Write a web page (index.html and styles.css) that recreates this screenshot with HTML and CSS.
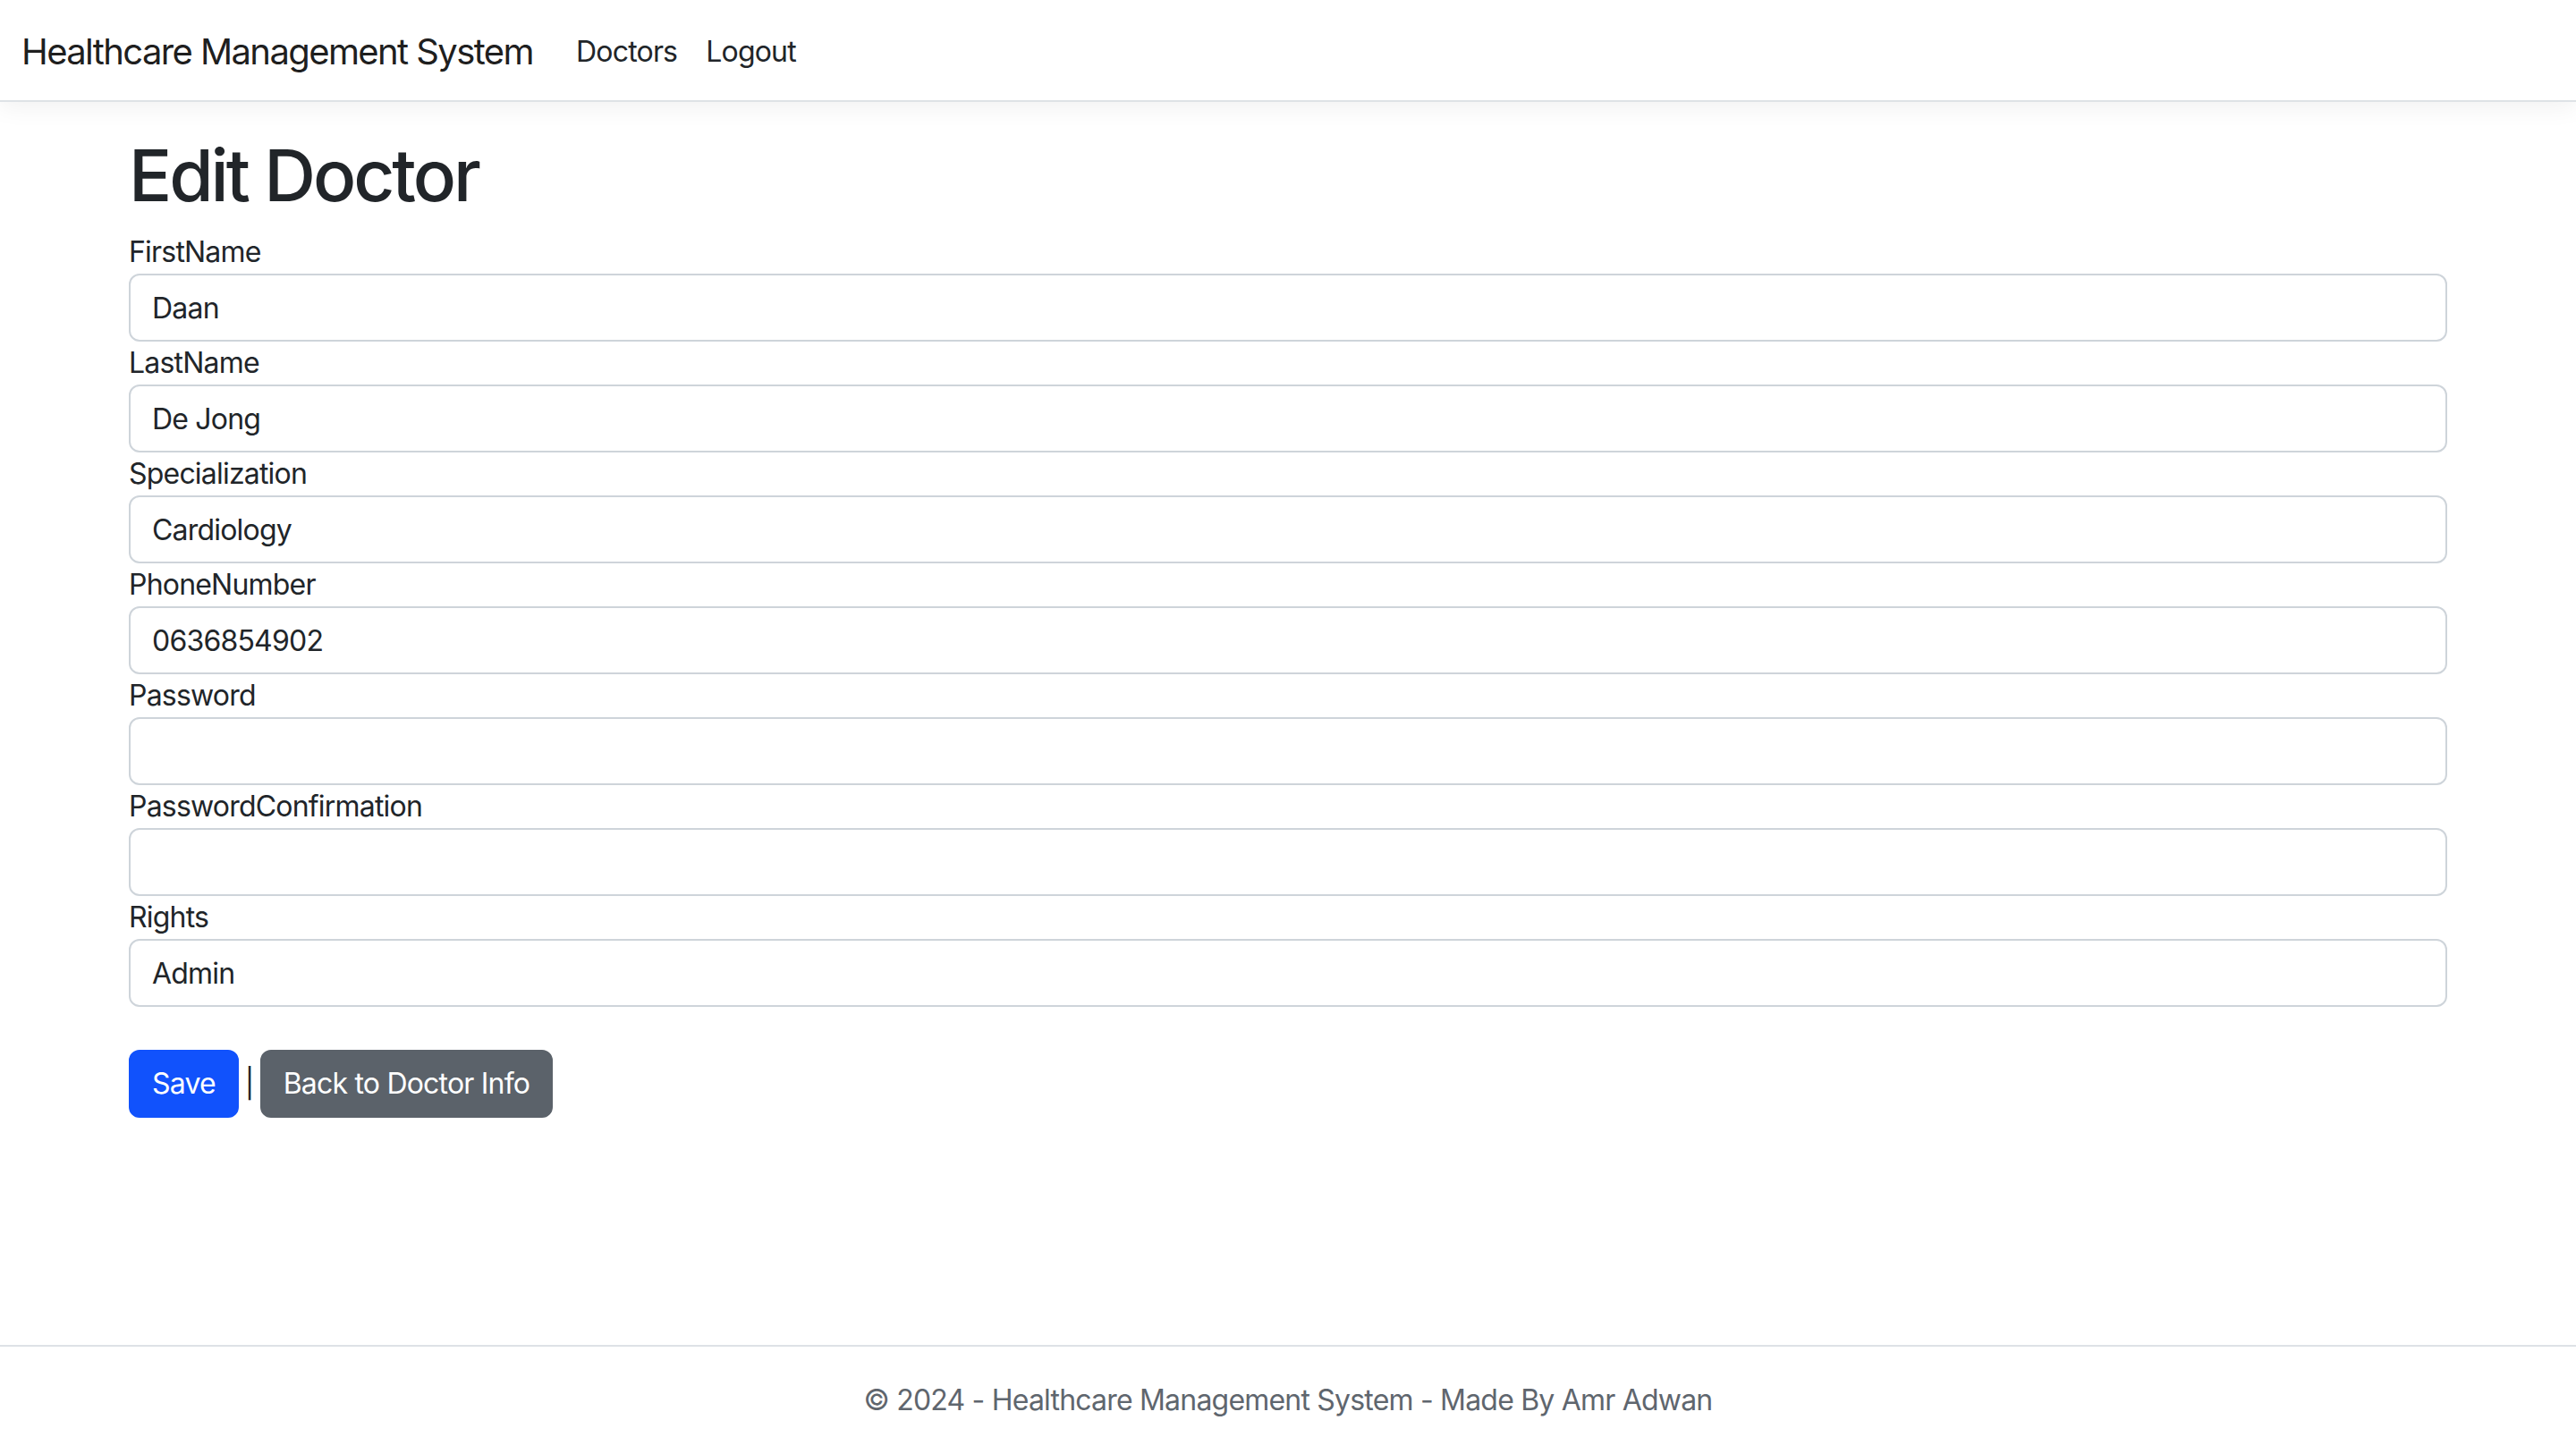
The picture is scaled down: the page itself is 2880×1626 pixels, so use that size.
FILE: index.html
```html
<!DOCTYPE html>
<html lang="en">
<head>
<meta charset="utf-8">
<title>Edit Doctor - Healthcare Management System</title>
<link rel="stylesheet" href="styles.css">
</head>
<body>
<header class="site-header">
  <nav class="navbar">
    <a class="brand" href="#">Healthcare Management System</a>
    <ul class="nav-links">
      <li><a class="nav-link" href="#">Doctors</a></li>
      <li><a class="nav-link" href="#">Logout</a></li>
    </ul>
  </nav>
</header>
<main class="container">
  <h1 class="page-title">Edit Doctor</h1>
  <form class="edit-form">
    <div class="form-group">
      <label class="form-label" for="fn">FirstName</label>
      <input class="form-control" id="fn" type="text" value="Daan">
    </div>
    <div class="form-group">
      <label class="form-label" for="ln">LastName</label>
      <input class="form-control" id="ln" type="text" value="De Jong">
    </div>
    <div class="form-group">
      <label class="form-label" for="sp">Specialization</label>
      <input class="form-control" id="sp" type="text" value="Cardiology">
    </div>
    <div class="form-group">
      <label class="form-label" for="ph">PhoneNumber</label>
      <input class="form-control" id="ph" type="text" value="0636854902">
    </div>
    <div class="form-group">
      <label class="form-label" for="pw">Password</label>
      <input class="form-control" id="pw" type="password">
    </div>
    <div class="form-group">
      <label class="form-label" for="pc">PasswordConfirmation</label>
      <input class="form-control" id="pc" type="password">
    </div>
    <div class="form-group">
      <label class="form-label" for="rg">Rights</label>
      <input class="form-control" id="rg" type="text" value="Admin">
    </div>
    <div class="form-actions">
      <button class="btn btn-primary" type="button">Save</button>
      <span class="sep">|</span>
      <a class="btn btn-secondary" href="#">Back to Doctor Info</a>
    </div>
  </form>
</main>
<footer class="site-footer">
  &copy; 2024 - Healthcare Management System - Made By Amr Adwan
</footer>
</body>
</html>
```
FILE: styles.css
```css
* { box-sizing: border-box; }
html, body { margin: 0; padding: 0; }
body {
  font-family: Inter, "Noto Sans", "Liberation Sans", sans-serif;
  font-size: 32px;
  line-height: 1.5;
  letter-spacing: -0.025em;
  color: #212529;
  background: #fff;
  min-height: 100vh;
  display: flex;
  flex-direction: column;
}
a { text-decoration: none; }

.site-header {
  background: #fff;
  border-bottom: 2px solid #dee2e6;
  box-shadow: 0 8px 24px rgba(0,0,0,0.05);
  margin-bottom: 32px;
}
.navbar {
  display: flex;
  align-items: center;
  padding: 18px 24px 14px;
}
.brand {
  font-size: 40px;
  line-height: 60px;
  letter-spacing: -0.04em;
  padding: 10px 0;
  margin-right: 32px;
  color: rgba(0,0,0,0.9);
}
.nav-links {
  display: flex;
  list-style: none;
  margin: 0;
  padding: 0;
}
.nav-link {
  display: block;
  padding: 16px;
  line-height: 48px;
  color: #212529;
}

.container {
  width: 100%;
  max-width: 2640px;
  margin: 0 auto;
  padding: 0 24px 32px;
}
.page-title {
  font-size: 80px;
  font-weight: 500;
  line-height: 1.2;
  letter-spacing: -0.038em;
  margin: 2px 0 14px;
}
.edit-form { margin: 0; }
.form-group { display: flex; flex-direction: column; }
.form-label { display: block; line-height: 48px; }
.form-control {
  display: block;
  width: 100%;
  height: 76px;
  padding: 12px 24px;
  font: inherit;
  letter-spacing: -0.025em;
  line-height: 48px;
  color: #212529;
  background: #fff;
  border: 2px solid #ced4da;
  border-radius: 12px;
  outline: none;
}
.form-actions {
  display: flex;
  align-items: center;
  margin-top: 48px;
}
.sep { padding: 0 7px; line-height: 48px; }
.btn {
  display: inline-block;
  padding: 12px 24px;
  font: inherit;
  letter-spacing: -0.025em;
  line-height: 48px;
  border: 2px solid transparent;
  border-radius: 12px;
  color: #fff;
  cursor: pointer;
}
.btn-primary { background: #1152fc; border-color: #1152fc; }
.btn-secondary { background: #5b626a; border-color: #5b626a; }

.site-footer {
  margin-top: auto;
  border-top: 2px solid #dee2e6;
  line-height: 120px;
  text-align: center;
  color: #5f666e;
  white-space: nowrap;
}
```
